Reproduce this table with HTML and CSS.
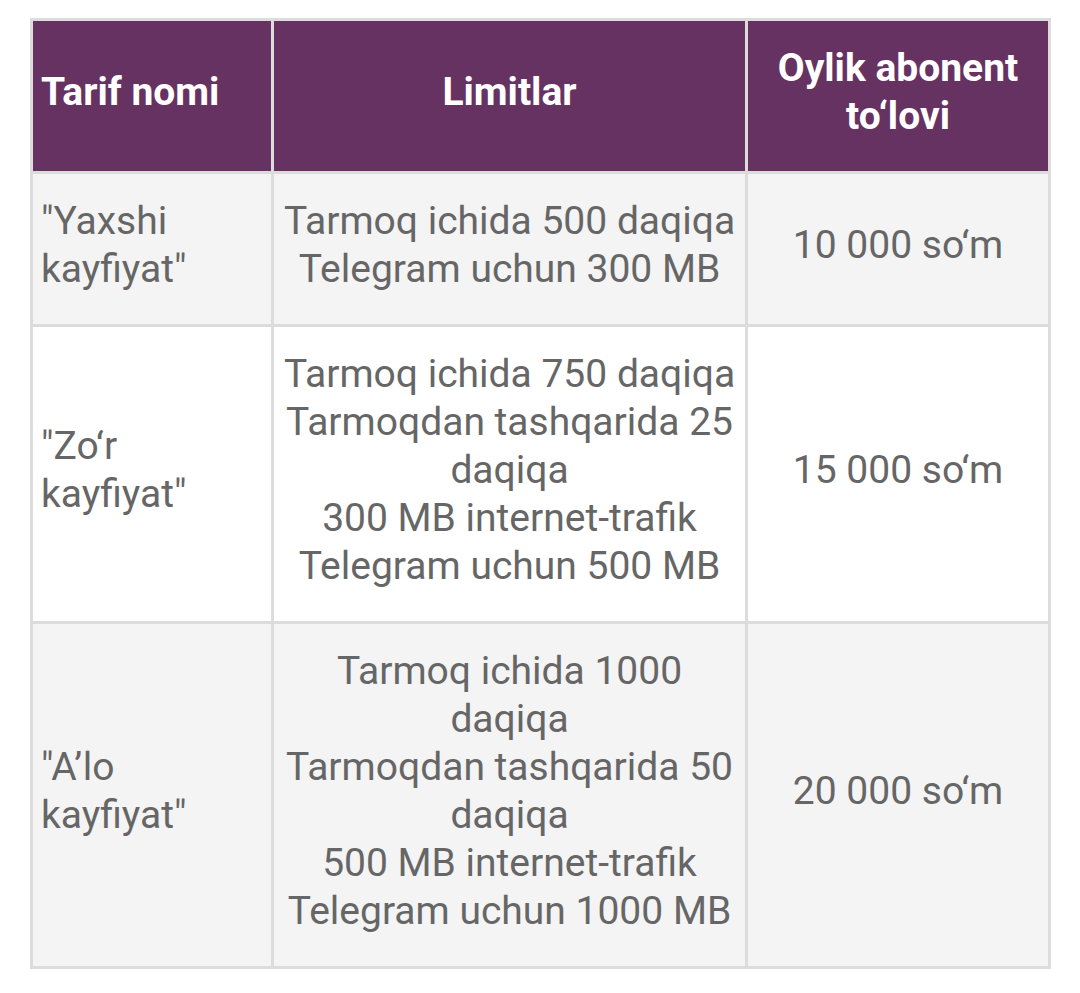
FILE: index.html
```html
<!DOCTYPE html>
<html>
<head>
<meta charset="utf-8">
<link rel="stylesheet" href="styles.css">
</head>
<body>
<table class="tariffs">
  <colgroup>
    <col class="c-name">
    <col class="c-limits">
    <col class="c-price">
  </colgroup>
  <thead>
    <tr>
      <th class="left">Tarif nomi</th>
      <th class="limits">Limitlar</th>
      <th>Oylik abonent to‘lovi</th>
    </tr>
  </thead>
  <tbody>
    <tr class="shaded">
      <td class="left">"Yaxshi kayfiyat"</td>
      <td class="limits">Tarmoq ichida 500 daqiqa<br>Telegram uchun 300 MB</td>
      <td>10 000 so‘m</td>
    </tr>
    <tr>
      <td class="left">"Zo‘r kayfiyat"</td>
      <td class="limits">Tarmoq ichida 750 daqiqa<br>Tarmoqdan tashqarida 25 daqiqa<br> 300 MB internet-trafik<br>Telegram uchun 500 MB</td>
      <td>15 000 so‘m</td>
    </tr>
    <tr class="shaded">
      <td class="left">"A’lo kayfiyat"</td>
      <td class="limits">Tarmoq ichida 1000 daqiqa<br>Tarmoqdan tashqarida 50 daqiqa<br> 500 MB internet-trafik<br>Telegram uchun 1000 MB</td>
      <td>20 000 so‘m</td>
    </tr>
  </tbody>
</table>
</body>
</html>
```

FILE: styles.css
```css
html, body {
  margin: 0;
  padding: 0;
  background: #ffffff;
}
body {
  padding: 18px 0 0 30px;
  font-family: Roboto, "Liberation Sans", sans-serif;
}
.tariffs {
  border-collapse: collapse;
  table-layout: fixed;
  width: 1018px;
  font-size: 39px;
  line-height: 48px;
}
.c-name { width: 241px; }
.c-limits { width: 474px; }
.c-price { width: 303px; }
.tariffs th,
.tariffs td {
  border: 3px solid #dcdcdc;
  padding: 23px 8px 31px 8px;
  text-align: center;
  vertical-align: middle;
}
.tariffs .limits {
  padding-left: 4px;
  padding-right: 4px;
}
.tariffs th {
  background: #653262;
  color: #ffffff;
  font-weight: bold;
}
.tariffs td {
  color: #666666;
  background: #ffffff;
}
.tariffs tr.shaded td {
  background: #f4f4f4;
}
.tariffs .left {
  text-align: left;
}
```
